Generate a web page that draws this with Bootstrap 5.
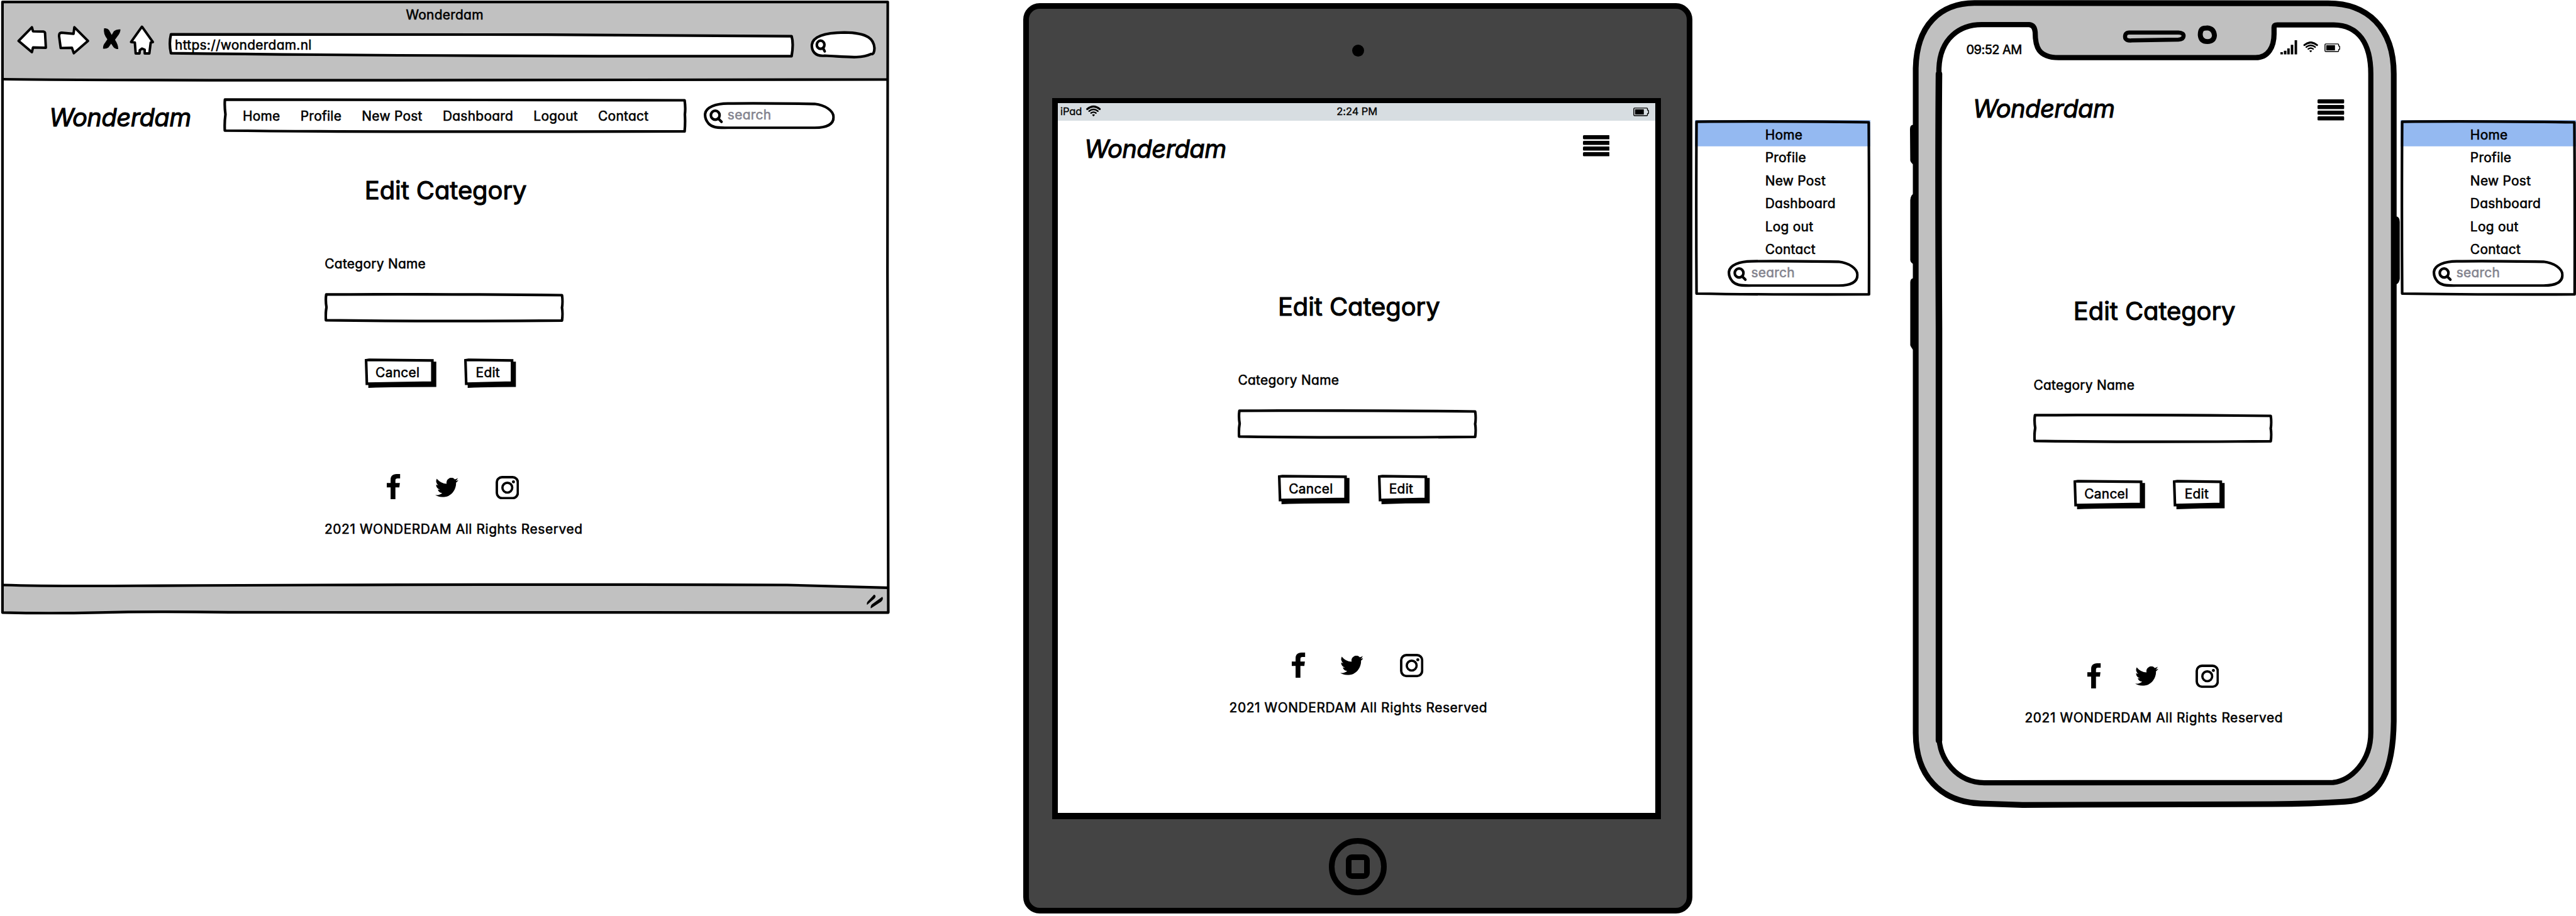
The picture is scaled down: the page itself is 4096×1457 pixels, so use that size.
<!DOCTYPE html>
<html lang="en">
<head>
<meta charset="utf-8">
<meta name="viewport" content="width=device-width, initial-scale=1">
<title>Wonderdam – Edit Category wireframes</title>
<link href="https://cdn.jsdelivr.net/npm/bootstrap@5.3.0/dist/css/bootstrap.min.css" rel="stylesheet">
<style>
  body { background:#fff; overflow:hidden; }
  .board {
    zoom:.8692; width:4712px; height:1676px; color:#000;
    font:400 24px/30px Inter,"Open Sans",sans-serif;
    font-feature-settings:"cv11"; letter-spacing:.35px; white-space:nowrap;
    -webkit-text-stroke:.7px currentColor;
  }
  .board a, .board button { color:#000; text-decoration:none; }
  .board svg { display:block; flex:none; }
  .backdrop { position:absolute; left:0; top:0; width:100%; height:100%; z-index:-1; overflow:visible; }
  .layer { position:relative; z-index:0; flex:none; }
  .ink { fill:none; stroke:#000; stroke-width:4.8; stroke-linejoin:round; stroke-linecap:round; }
  .paper { fill:#fff; }

  .logo { font-size:46px; line-height:56px; font-style:italic; letter-spacing:-.7px; -webkit-text-stroke-width:1.2px; }
  .page-title { font-size:46px; line-height:56px; letter-spacing:-.1px; margin:0 0 91px 73px; padding-top:2px; font-weight:400; -webkit-text-stroke-width:1.3px; }

  /* browser */
  .browser { width:1627px; height:1125px; padding-top:13px; }
  .toolbar { padding-left:30px; margin-top:2px; }
  .toolbar .fwd { margin-left:15px; } .toolbar .stop { margin-left:21px; }
  .toolbar .home { margin-left:13px; } .toolbar .url { width:1148px; height:64px; margin-left:22px; padding:22.500px 0 0 13px; }
  .toolbar .find { margin-left:26px; }
  .site-head { margin-top:71px; padding-left:90px; }
  .site-head .logo { width:318px; margin-top:7px; }
  .menu-bar { width:847px; height:64px; padding:17.500px 0 0 36px; gap:37px; }
  .menu-bar .nav-link { padding:0; }
  .search-pill { width:240px; height:50px; padding:10px 0 0 43px; color:#84848f; }
  .site-head .search-pill { margin:6px 0 0 33px; }

  /* form */
  .category-form { width:438px; }
  .category-form label { display:block; margin-bottom:38.500px; padding-top:.8px; }
  .field { height:54px; margin-bottom:66px; margin-top:-.8px; }
  .field input { width:100%; height:100%; background:none; border:0; outline:0; padding:0 12px; }
  .actions { gap:51.500px; padding-left:73px; }
  .actions button { background:none; border:0; height:54px; padding:0 0 1px 20px; text-align:left; display:block; letter-spacing:inherit; line-height:30px; -webkit-text-stroke:inherit; }
  .actions .cancel { width:131px; } .actions .edit { width:95px; padding-left:21px; }
  .site-foot { letter-spacing:.7px; }
  .social { padding-left:114.500px; height:46px; margin-bottom:40px; }
  .social .tw { margin:6.500px 0 0 63px; } .social .ig { margin:3px 0 0 67.500px; }

  .browser .category-form { margin:74.600px 0 0 594px; }
  .browser .site-foot { margin:158px 0 0 593.600px; }

  /* tablet */
  .tablet { width:1224px; height:1666px; margin:6px 0 0 245px; border:10.400px solid #000; border-radius:30px; background:#444; }
  .cam { width:22px; height:22px; margin-top:65px; }
  .cam-zone { height:163px; }
  .tab-screen { width:1114px; height:1320px; margin-left:42px; border:solid #000; border-width:9.300px 10.400px 11.600px; background:#fff; }
  .tab-status { height:32px; background:#d7dde1; font-size:19px; letter-spacing:-.1px; padding:0 11.500px 0 5px; -webkit-text-stroke-width:.4px; }
  .tab-status .clock { margin-left:431px; }
  .tab-head { padding:25px 83.400px 0 49px; }
  .tablet .category-form { margin:230px 0 0 330px; }
  .tablet .site-foot { margin:271px 0 0 314px; }
  .home-btn { width:105px; height:105px; margin-top:34px; border:10.400px solid #000; }
  .home-sq { width:44px; height:44px; border:10.400px solid #000; border-radius:11px; }

  /* phone */
  .phone { width:892px; height:1480px; margin-left:72px; padding-top:74px; }
  .ph-status { padding-left:103px; height:32px; }
  .ph-status .clock { width:575px; font-size:23px; letter-spacing:-.6px; margin-top:2px; }
  .ph-head { margin-top:65px; padding:0 97.400px 0 115px; }
  .phone .category-form { margin:313px 0 0 226px; }
  .phone .site-foot { margin:282px 0 0 210px; }

  /* flyout menu */
  .flyout { width:321px; height:322px; margin:220px 0 0 5px; padding-top:6.300px; }
  .flyout .nav-link { padding:0 0 0 128px; line-height:42px; }
  .flyout .search-pill { margin:-3.500px 0 0 59.500px; }
</style>
</head>
<body>
<svg width="0" height="0" class="position-absolute">
  <symbol id="i-fb" viewBox="0 0 25 46"><path d="M24.500 0H18C10.500 0 7 4 7 10.500V16.500H0V24.500H7V46H15.800V24.500H23L24 16.500H15.800V12C15.800 9 17 8 19.500 8H24.500Z"/></symbol>
  <symbol id="i-tw" viewBox="0 2 16 13" preserveAspectRatio="none"><path d="M5.026 15c6.038 0 9.341-5.003 9.341-9.334 0-.14 0-.282-.006-.422A6.685 6.685 0 0 0 16 3.542a6.658 6.658 0 0 1-1.889.518 3.301 3.301 0 0 0 1.447-1.817 6.533 6.533 0 0 1-2.087.793A3.286 3.286 0 0 0 7.875 6.03a9.325 9.325 0 0 1-6.767-3.429 3.289 3.289 0 0 0 1.018 4.382A3.323 3.323 0 0 1 .64 6.575v.045a3.288 3.288 0 0 0 2.632 3.218 3.203 3.203 0 0 1-.865.115 3.23 3.23 0 0 1-.614-.057 3.283 3.283 0 0 0 3.067 2.277A6.588 6.588 0 0 1 .78 13.58a6.32 6.32 0 0 1-.78-.045A9.344 9.344 0 0 0 5.026 15z"/></symbol>
  <symbol id="i-ig" viewBox="0 0 43 43"><rect x="2.300" y="2.300" width="38.400" height="38.400" rx="9.500" fill="none" stroke="#000" stroke-width="4.400"/><circle cx="21.500" cy="21.500" r="9" fill="none" stroke="#000" stroke-width="4.200"/><circle cx="32.700" cy="10.800" r="2.800"/></symbol>
  <symbol id="i-burger" viewBox="0 0 49 39"><rect width="49" height="7.400" rx="1.800"/><rect y="10.400" width="49" height="7.400" rx="1.800"/><rect y="20.800" width="49" height="7.400" rx="1.800"/><rect y="31.200" width="49" height="7.400" rx="1.800"/></symbol>
  <symbol id="i-wifi" viewBox="0 0 27 20"><g fill="none" stroke="#000" stroke-linecap="round"><path d="M2 6.500Q13.500-3 25 6.500" stroke-width="3.600"/><path d="M5.500 10.200Q13.500 4 21.500 10.200" stroke-width="2.900"/><path d="M9 13.700Q13.500 10.400 18 13.700" stroke-width="2.700"/></g><path d="M10.800 17Q13.500 15 16.200 17L13.500 20Z"/></symbol>
  <symbol id="i-batt" viewBox="0 0 29 16"><path d="M2.500 1H24.500Q26 1 26 2.500V4.500L28 6V10.500L26 11.500V13.500Q26 15 24.500 15H2.500Q1 15 1 13.500V2.500Q1 1 2.500 1Z" fill="none" stroke="#000" stroke-width="1.700"/><rect x="3.300" y="3.300" width="16" height="9.500"/></symbol>
  <symbol id="s-field" viewBox="0 0 438 54"><path class="paper ink" d="M3 2.800Q190 1.500 434.500 4Q436.500 16 434.500 27Q436.500 38 434.500 50.500Q190 52.500 2.500 50Q1.500 38 3.500 26Q1.500 14 3 2.800Z"/></symbol>
  <symbol id="s-pill" viewBox="0 0 240 50"><path class="paper ink" d="M44 3Q100 2 203 3.800C222 6 237.500 16 237.500 28C237.500 40 228 47.500 203 47.500L44 47.500C22 48 15 46 9 40C4 34 2 28 2.500 22C4 10 22 3 44 3Z"/><ellipse class="ink" cx="21" cy="24.500" rx="8" ry="8.200"/><path class="ink" d="M26.500 30.500L32.500 36.500"/></symbol>
  <symbol id="s-cancel" viewBox="0 0 131 54"><path d="M6.500 6H131V52.500Q60 52.500 6.500 54Z"/><path class="paper ink" style="stroke-linejoin:miter" d="M2.400 3.500L8 2.800L123.700 3.800V44.500Q60 45.500 3.800 46.500Z"/></symbol>
  <symbol id="s-edit" viewBox="0 0 95 54"><path d="M6.500 6H95V52.500Q50 52.500 6.500 54Z"/><path class="paper ink" style="stroke-linejoin:miter" d="M2.400 3.500L8 2.800L87.700 3.800V44.500Q50 45.500 3.800 46.500Z"/></symbol>
  <symbol id="s-flyout" viewBox="0 0 321 322"><path d="M2 2.500L318 3.500 318.500 318.500Q100 320 3 318Q1 150 2 2.500Z" fill="#fff"/><path d="M0 0H321V48H0Z" fill="#94b9f1"/><path class="ink" d="M3 3Q130 1.500 318 4Q319 160 318.500 319Q120 319.500 3 317.500Q2 160 3 3Z"/></symbol>
</svg>

<main class="board d-flex align-items-start">

  <!-- Desktop browser -->
  <section class="browser layer">
    <svg class="backdrop" viewBox="0 0 1627 1125">
      <path d="M4 3.500H1624V1121H4Z" fill="#fff"/>
      <path d="M4 3.500H1624V145.500H4Z" fill="#c1c1c1"/>
      <path d="M4 1070.500Q90 1073 250 1072Q900 1068.500 1440 1070.500L1624 1075.500V1121.500Q900 1121.500 420 1120.500Q280 1118.500 180 1121Q90 1122.500 4 1121Z" fill="#c1c1c1"/>
      <g class="ink">
        <path d="M4.500 3.500H1624L1623.500 500 1625 1121Q900 1122.500 420 1120.500Q280 1118.500 180 1121Q90 1123 4.500 1121V400Z"/>
        <path d="M5 145Q220 147.500 900 146.500L1623 145.500"/>
        <path d="M5 1070.500Q90 1073 250 1072Q900 1068.500 1440 1070.500L1623 1075.500"/>
      </g>
      <path d="M1599 1088Q1604 1090 1600 1095L1586 1107Q1585 1103 1587 1101ZM1614 1092Q1617 1096 1612 1101L1593 1113.500Q1592 1109 1595 1106Z"/>
    </svg>
    <div class="text-center">Wonderdam</div>
    <div class="toolbar d-flex align-items-start">
      <svg width="58" height="64" viewBox="30 45 58 64"><path class="paper ink" style="stroke-width:4.500" d="M34 75L58.500 50 60.500 57.500 80 58Q82.500 58.500 82.500 61L84 87.500 60.500 87 58.500 95.500Z"/></svg>
      <svg class="fwd" width="62" height="64" viewBox="103 45 62 64"><path class="paper ink" style="stroke-width:4.500" d="M160.500 75L135.500 50 134 62 112 60Q107.500 60 107.500 66L110.500 88 131 87.500 134.500 97.500Z"/></svg>
      <svg class="stop" width="36" height="64" viewBox="186 45 36 64"><path d="M190 52Q196 51 199 55L204 64 208 57Q213 53 220 54Q220 60 215 66L210 73Q216 82 216 90Q210 90 207 86L203 80 198 87Q194 90 188 89Q188 82 192 78L196 72Q188 62 190 52Z"/></svg>
      <svg class="home" width="50" height="64" viewBox="235 45 50 64"><path class="paper ink" style="stroke-width:4.500" d="M260 49L280 77 276 78 273.500 98H265V91L260 89 256 92 255.500 98H248.500L247 78 240 77Z"/></svg>
      <div class="url layer">
        <svg class="backdrop" viewBox="307 45 1148 64"><path class="paper ink" d="M312.500 63Q700 63 1000 63.500L1448 66.500Q1452 80 1448 103Q800 103.500 312.500 97.500Q308.500 80 312.500 63Z"/></svg>
        https://wonderdam.nl
      </div>
      <svg class="find" width="123" height="64" viewBox="1481 45 123 64"><path class="paper ink" d="M1509 102C1490 104 1485 92 1485.500 82C1487 68 1505 60 1545 59.500C1590 60 1599 73 1600 88Q1600 100 1594 99C1575 108 1550 104 1509 102Z"/><ellipse class="ink" cx="1501.500" cy="82" rx="7" ry="7.500"/><path class="ink" d="M1506 88L1509 94"/></svg>
    </div>
    <header class="site-head d-flex align-items-start">
      <a class="logo" href="#">Wonderdam</a>
      <nav class="menu-bar layer d-flex">
        <svg class="backdrop" viewBox="0 0 847 64"><path class="paper ink" d="M3 2.800Q350 1.500 844 4Q846 18 844.500 30Q845.500 45 844 61Q300 62.500 2.800 59.500Q2 44 4 30Q2 15 3 2.800Z"/></svg>
        <a class="nav-link" href="#">Home</a><a class="nav-link" href="#">Profile</a><a class="nav-link" href="#">New Post</a><a class="nav-link" href="#">Dashboard</a><a class="nav-link" href="#">Logout</a><a class="nav-link" href="#">Contact</a>
      </nav>
      <div class="search-pill layer"><svg class="backdrop"><use href="#s-pill"/></svg>search</div>
    </header>
    <form class="category-form">
      <h1 class="page-title">Edit Category</h1>
      <label for="n1">Category Name</label>
      <div class="field layer"><svg class="backdrop"><use href="#s-field"/></svg><input id="n1" type="text"></div>
      <div class="actions d-flex"><button type="button" class="cancel layer"><svg class="backdrop"><use href="#s-cancel"/></svg>Cancel</button><button type="button" class="edit layer"><svg class="backdrop"><use href="#s-edit"/></svg>Edit</button></div>
    </form>
    <footer class="site-foot">
      <div class="social d-flex align-items-start"><svg width="25" height="46"><use href="#i-fb"/></svg><svg class="tw" width="42.500" height="35.500"><use href="#i-tw"/></svg><svg class="ig" width="43" height="43"><use href="#i-ig"/></svg></div>
      <div>2021 WONDERDAM All Rights Reserved</div>
    </footer>
  </section>

  <!-- Tablet -->
  <section class="tablet flex-shrink-0">
    <div class="cam-zone d-flex justify-content-center"><span class="cam bg-black rounded-circle"></span></div>
    <div class="tab-screen">
      <div class="tab-status d-flex align-items-start">
        <span>iPad</span>
        <svg class="ms-2 mt-1" width="27" height="22"><use href="#i-wifi"/></svg>
        <span class="clock">2:24 PM</span>
        <svg class="ms-auto mt-2" width="29" height="16"><use href="#i-batt"/></svg>
      </div>
      <header class="tab-head d-flex justify-content-between align-items-start">
        <a class="logo" href="#">Wonderdam</a>
        <svg width="49" height="39" style="margin-top:2px"><use href="#i-burger"/></svg>
      </header>
      <form class="category-form">
        <h1 class="page-title">Edit Category</h1>
        <label for="n2">Category Name</label>
        <div class="field layer"><svg class="backdrop"><use href="#s-field"/></svg><input id="n2" type="text"></div>
        <div class="actions d-flex"><button type="button" class="cancel layer"><svg class="backdrop"><use href="#s-cancel"/></svg>Cancel</button><button type="button" class="edit layer"><svg class="backdrop"><use href="#s-edit"/></svg>Edit</button></div>
      </form>
      <footer class="site-foot">
        <div class="social d-flex align-items-start"><svg width="25" height="46"><use href="#i-fb"/></svg><svg class="tw" width="42.500" height="35.500"><use href="#i-tw"/></svg><svg class="ig" width="43" height="43"><use href="#i-ig"/></svg></div>
        <div>2021 WONDERDAM All Rights Reserved</div>
      </footer>
    </div>
    <div class="d-flex justify-content-center"><div class="home-btn rounded-circle d-flex justify-content-center align-items-center"><span class="home-sq"></span></div></div>
  </section>

  <aside class="flyout layer">
    <svg class="backdrop"><use href="#s-flyout"/></svg>
    <nav class="nav flex-column"><a class="nav-link" href="#">Home</a><a class="nav-link" href="#">Profile</a><a class="nav-link" href="#">New Post</a><a class="nav-link" href="#">Dashboard</a><a class="nav-link" href="#">Log out</a><a class="nav-link" href="#">Contact</a></nav>
    <div class="search-pill layer"><svg class="backdrop"><use href="#s-pill"/></svg>search</div>
  </aside>

  <!-- Phone -->
  <section class="phone layer">
    <svg class="backdrop" viewBox="3494 0 892 1480">
      <path d="M3504 229Q3494 226 3494 236L3494.500 294Q3496 299 3504 304ZM3504 352Q3495 356 3494.500 366V476Q3495 482 3504 485ZM3504 509Q3495 508 3494.500 516V632Q3497 638 3504 645ZM4378 396Q4390 394 4390 406V510Q4389 522 4376 522Z"/>
      <path d="M3504.500 125C3506 45 3550 6 3612 5.500L4259 6C4330 6 4379 50 4379 135V1320C4378 1405 4358 1464 4290 1467Q4230 1471 4157 1471.500L3700 1473L3624 1470.500C3550 1468 3504 1420 3504.500 1340Z" fill="#c0c0c0" stroke="#000" stroke-width="10.500"/>
      <path d="M3547 125C3549 70 3585 45 3625 45H3712Q3722 46 3723 59C3723 85 3728 105 3766 105.500H4126C4150 105.500 4160 85 4160 62V50Q4160 45.500 4166 45.500H4269C4315 46 4337 80 4337 135V1340C4337 1395 4300 1428 4268 1432L3630 1432.500C3580 1432 3547 1390 3547 1345Q3545 900 3547 550Q3545 300 3547 125Z" fill="#fff" stroke="#000" stroke-width="9.500" stroke-linejoin="round"/>
      <path d="M3547 135Q3545.500 300 3547 600V1355" fill="none" stroke="#000" stroke-width="12" stroke-linecap="round"/>
      <path d="M3895 59.500H3985Q3995 60 3994.500 66Q3994 72 3985 72.500L3900 74Q3888 75 3887.500 68Q3887 59.500 3895 59.500Z" fill="none" stroke="#000" stroke-width="7.500"/>
      <path d="M4038 51Q4050 52 4051 65Q4050 76 4038 76Q4026 76 4025 64Q4025 52 4033 51.500Z" fill="#c0c0c0" stroke="#000" stroke-width="9"/>
    </svg>
    <div class="ph-status d-flex align-items-start">
      <span class="clock">09:52 AM</span>
      <svg width="31" height="26"><path d="M0 22H4.500V26H0ZM6.300 19.200H11V26H6.300ZM12.500 15H17V26H12.500ZM19 8.300H23.500V26H19ZM26 0H30.500V26H26Z"/></svg>
      <svg width="28" height="20" style="margin:1.500px 0 0 10px"><use href="#i-wifi"/></svg>
      <svg width="29" height="16" style="margin:5.700px 0 0 11.500px"><use href="#i-batt"/></svg>
    </div>
    <header class="ph-head d-flex justify-content-between align-items-start">
      <a class="logo" href="#">Wonderdam</a>
      <svg width="49" height="39" style="margin-top:11px"><use href="#i-burger"/></svg>
    </header>
    <form class="category-form">
      <h1 class="page-title">Edit Category</h1>
      <label for="n3">Category Name</label>
      <div class="field layer"><svg class="backdrop"><use href="#s-field"/></svg><input id="n3" type="text"></div>
      <div class="actions d-flex"><button type="button" class="cancel layer"><svg class="backdrop"><use href="#s-cancel"/></svg>Cancel</button><button type="button" class="edit layer"><svg class="backdrop"><use href="#s-edit"/></svg>Edit</button></div>
    </form>
    <footer class="site-foot">
      <div class="social d-flex align-items-start"><svg width="25" height="46"><use href="#i-fb"/></svg><svg class="tw" width="42.500" height="35.500"><use href="#i-tw"/></svg><svg class="ig" width="43" height="43"><use href="#i-ig"/></svg></div>
      <div>2021 WONDERDAM All Rights Reserved</div>
    </footer>
  </section>

  <aside class="flyout layer">
    <svg class="backdrop"><use href="#s-flyout"/></svg>
    <nav class="nav flex-column"><a class="nav-link" href="#">Home</a><a class="nav-link" href="#">Profile</a><a class="nav-link" href="#">New Post</a><a class="nav-link" href="#">Dashboard</a><a class="nav-link" href="#">Log out</a><a class="nav-link" href="#">Contact</a></nav>
    <div class="search-pill layer"><svg class="backdrop"><use href="#s-pill"/></svg>search</div>
  </aside>
</main>
<script src="https://cdn.jsdelivr.net/npm/bootstrap@5.3.0/dist/js/bootstrap.bundle.min.js"></script>
</body>
</html>
